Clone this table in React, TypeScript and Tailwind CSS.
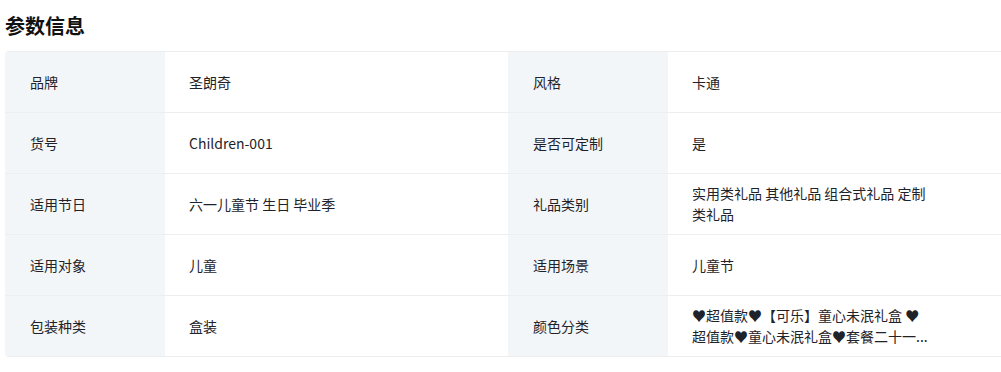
const rows: [string, React.ReactNode, string, React.ReactNode][] = [
  ["品牌", "圣朗奇", "风格", "卡通"],
  ["货号", "Children-001", "是否可定制", "是"],
  [
    "适用节日",
    "六一儿童节 生日 毕业季",
    "礼品类别",
    (
      <>
        <span className="block whitespace-nowrap">实用类礼品 其他礼品 组合式礼品 定制</span>
        <span className="block whitespace-nowrap">类礼品</span>
      </>
    ),
  ],
  ["适用对象", "儿童", "适用场景", "儿童节"],
  [
    "包装种类",
    "盒装",
    "颜色分类",
    (
      <>
        <span className="block whitespace-nowrap">♥超值款♥【可乐】童心未泯礼盒 ♥</span>
        <span className="block whitespace-nowrap">超值款♥童心未泯礼盒♥套餐二十一...</span>
      </>
    ),
  ],
];

function Label({ children }: { children: React.ReactNode }) {
  return (
    <div className="flex items-center bg-[#f3f6f9] pl-[25px] text-[14px] text-[#1f2329]">
      {children}
    </div>
  );
}

function Value({ children }: { children: React.ReactNode }) {
  return (
    <div className="flex items-center bg-white pl-[24px] text-[14px] leading-[21px] text-[#1f2329]">
      <div>{children}</div>
    </div>
  );
}

export default function App() {
  return (
    <div
      className="w-[1001px] h-[372px] overflow-hidden bg-white"
      style={{ fontFamily: '"Noto Sans CJK SC", "Noto Sans", sans-serif' }}
    >
      <h2 className="h-[51px] flex items-center pl-[5px] text-[20px] font-bold text-[#111111] leading-none">
        参数信息
      </h2>
      <div className="pl-[5px]">
        <div className="w-[1010px] rounded-[4px] border-y border-r border-[#eeeeee] overflow-hidden">
          {rows.map(([l1, v1, l2, v2], i) => (
            <div
              key={i}
              className={
                "grid grid-cols-[160px_343px_160px_1fr] " +
                (i > 0 ? "h-[61px] border-t border-[#eeeeee]" : "h-[60px]")
              }
            >
              <Label>{l1}</Label>
              <Value>{v1}</Value>
              <Label>{l2}</Label>
              <Value>{v2}</Value>
            </div>
          ))}
        </div>
      </div>
    </div>
  );
}
